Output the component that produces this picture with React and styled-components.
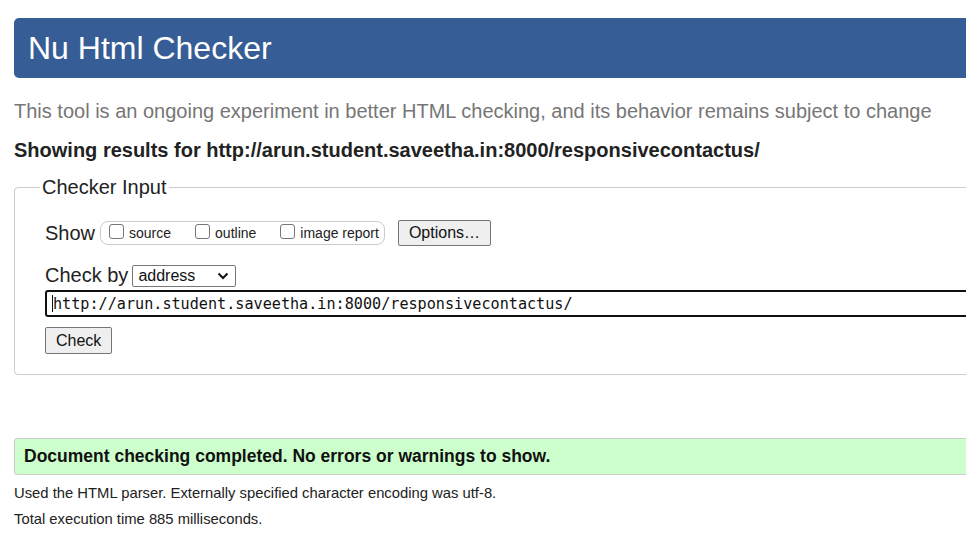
import React from 'react'
import styled, { createGlobalStyle } from 'styled-components'

const Global = createGlobalStyle`
html, body {
  margin: 0;
  background: #fff;
  overflow: hidden;
}
body {
  font-family: "Liberation Sans", Arial, sans-serif;
  color: #222;
}
`

const Page = styled.div`
width: 1000px;
padding: 18px 0 0 14px;
`

const Header = styled.h1`
margin: 0;
height: 60px;
display: flex;
align-items: center;
padding-left: 14px;
background: #365d95;
color: #fff;
font-weight: normal;
font-size: 32px;
border-radius: 5px;
`

const Intro = styled.p`
margin: 21px 0 0;
font-size: 20px;
line-height: 24px;
color: #767676;
`

const Results = styled.p`
margin: 15px 0 0;
font-size: 20px;
line-height: 24px;
font-weight: bold;
color: #222;
`

const Fieldset = styled.fieldset`
margin: 14px 0 0;
padding: 8px 30px 20px 30px;
border: 1px solid #ccc;
border-radius: 4px;
`

const Legend = styled.legend`
font-size: 20px;
padding: 0 2px;
margin-left: -5px;
color: #222;
`

const Row = styled.div`
display: flex;
align-items: center;
gap: ${p => p.gap || 6}px;
margin-top: ${p => p.top || 0}px;
font-size: 20px;
`

const Group = styled.div`
display: flex;
align-items: center;
gap: 24px;
height: 22px;
padding: 0 5px 0 8px;
border: 1px solid #ccc;
border-radius: 8px;
`

const Opt = styled.label`
display: flex;
align-items: center;
gap: 5px;
font-size: 14px;
`

const Box = styled.span`
width: 15px;
height: 15px;
border: 1px solid #767676;
border-radius: 3px;
box-sizing: border-box;
margin-top: -4px;
`

const Button = styled.button`
font-family: "Liberation Sans", Arial, sans-serif;
font-size: 16px;
color: #111;
background: #efefef;
border: 1px solid #767676;
border-radius: 2px;
padding: 0 10px;
height: ${p => p.h || 27}px;
margin-left: ${p => p.left || 0}px;
`

const Select = styled.div`
display: flex;
align-items: center;
justify-content: space-between;
width: 104px;
height: 22px;
box-sizing: border-box;
padding: 0 6px 0 5px;
border: 1px solid #767676;
border-radius: 2px;
font-size: 16px;
color: #111;
`

const UrlInput = styled.div`
margin-top: 3px;
height: 27px;
box-sizing: border-box;
border: 2px solid #111;
border-radius: 3px;
display: flex;
align-items: center;
padding-left: 5px;
font-family: "DejaVu Sans Mono", "Liberation Mono", monospace;
font-size: 15.15px;
color: #111;
`

const Caret = styled.span`
display: inline-block;
width: 1px;
height: 17px;
background: #111;
`

const Success = styled.div`
margin-top: 63px;
height: 37px;
box-sizing: border-box;
display: flex;
align-items: center;
padding-left: 9px;
background: #ccffcc;
border: 1px solid #ccc;
border-radius: 3px;
font-size: 17.5px;
font-weight: bold;
color: #111;
`

const Note = styled.p`
margin: ${p => p.top || 0}px 0 0;
font-size: 14.8px;
line-height: 16px;
color: #222;
`

const Check = ({ label }) => (
  <Opt><Box />{label}</Opt>
)

export default function App() {
  return (
    <Page>
      <Global />
      <Header>Nu Html Checker</Header>
      <Intro>This tool is an ongoing experiment in better HTML checking, and its behavior remains subject to change</Intro>
      <Results>Showing results for http://arun.student.saveetha.in:8000/responsivecontactus/</Results>
      <Fieldset>
        <Legend>Checker Input</Legend>
        <Row gap={5} top={13}>
          Show
          <Group>
            <Check label="source" />
            <Check label="outline" />
            <Check label="image report" />
          </Group>
          <Button left={8} h={26}>Options…</Button>
        </Row>
        <Row gap={4} top={18}>
          Check by
          <Select>
            address
            <svg width="12" height="8" viewBox="0 0 12 8">
              <path d="M1.5 1.5 L6 6 L10.5 1.5" fill="none" stroke="#111" strokeWidth="2" />
            </svg>
          </Select>
        </Row>
        <UrlInput><Caret />http://arun.student.saveetha.in:8000/responsivecontactus/</UrlInput>
        <Row top={10}>
          <Button>Check</Button>
        </Row>
      </Fieldset>
      <Success>Document checking completed. No errors or warnings to show.</Success>
      <Note top={10}>Used the HTML parser. Externally specified character encoding was utf-8.</Note>
      <Note top={10}>Total execution time 885 milliseconds.</Note>
    </Page>
  )
}
